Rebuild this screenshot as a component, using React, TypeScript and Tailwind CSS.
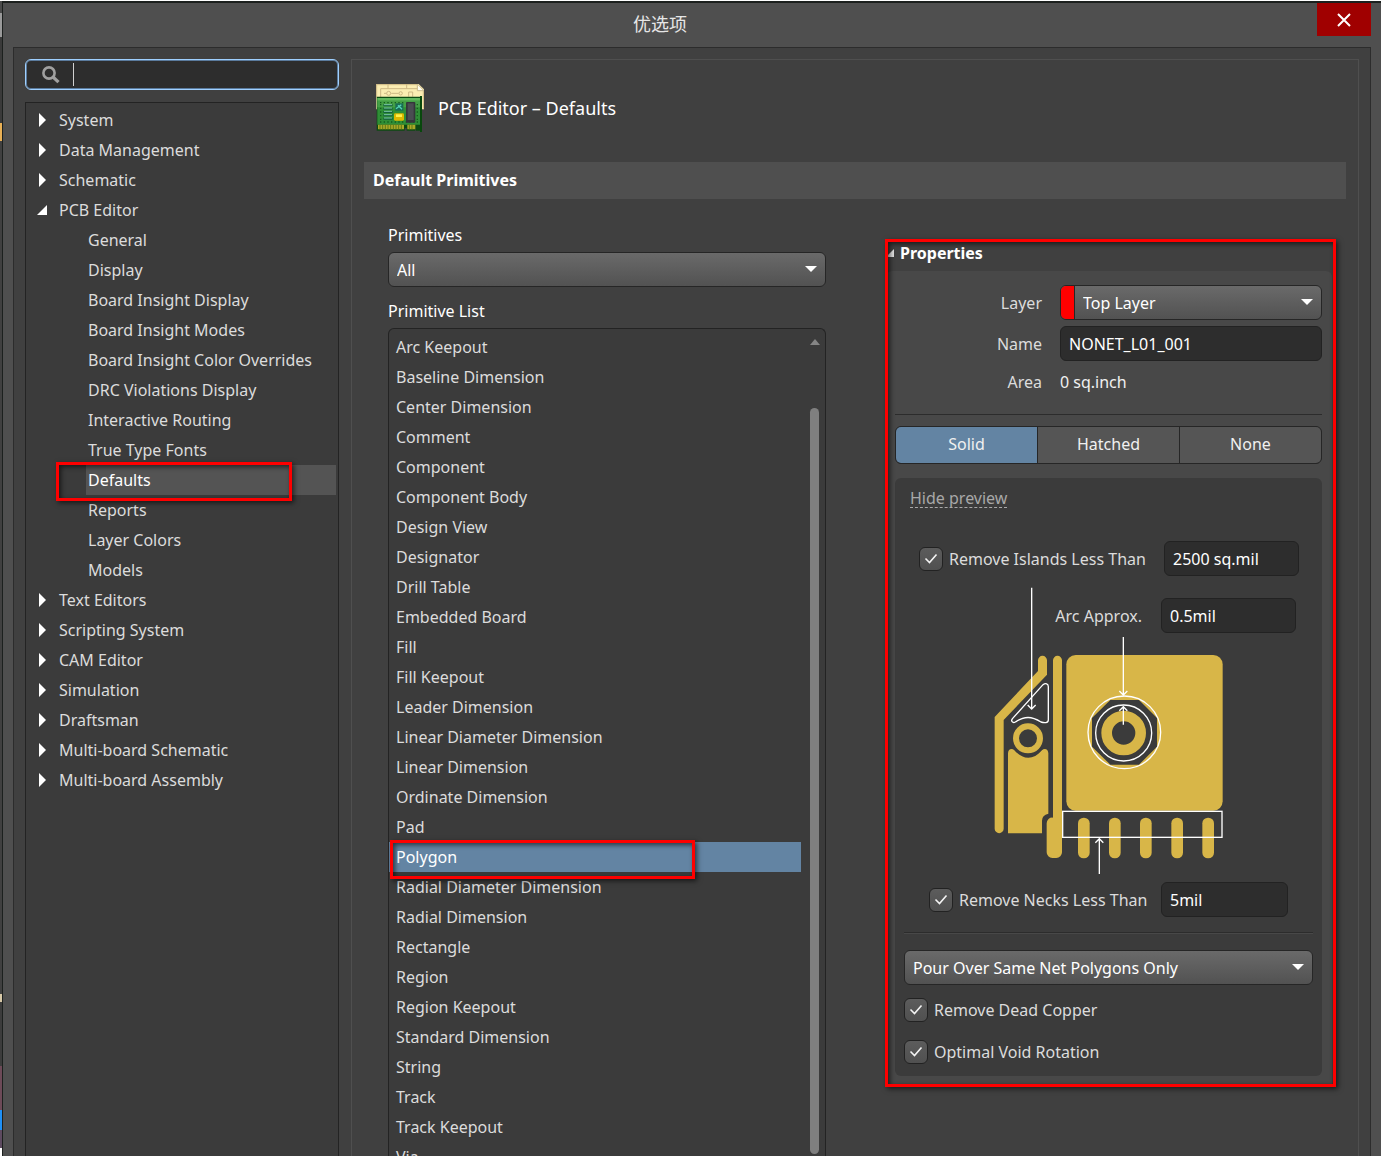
import { useState } from "react";
import type { ComponentProps, ReactNode } from "react";
import clsx from "clsx";

type TreeItem = {
  label: string;
  children?: string[];
};

const TREE: TreeItem[] = [
  { label: "System" },
  { label: "Data Management" },
  { label: "Schematic" },
  {
    label: "PCB Editor",
    children: [
      "General",
      "Display",
      "Board Insight Display",
      "Board Insight Modes",
      "Board Insight Color Overrides",
      "DRC Violations Display",
      "Interactive Routing",
      "True Type Fonts",
      "Defaults",
      "Reports",
      "Layer Colors",
      "Models",
    ],
  },
  { label: "Text Editors" },
  { label: "Scripting System" },
  { label: "CAM Editor" },
  { label: "Simulation" },
  { label: "Draftsman" },
  { label: "Multi-board Schematic" },
  { label: "Multi-board Assembly" },
];

const PRIMITIVES = [
  "Arc Keepout",
  "Baseline Dimension",
  "Center Dimension",
  "Comment",
  "Component",
  "Component Body",
  "Design View",
  "Designator",
  "Drill Table",
  "Embedded Board",
  "Fill",
  "Fill Keepout",
  "Leader Dimension",
  "Linear Diameter Dimension",
  "Linear Dimension",
  "Ordinate Dimension",
  "Pad",
  "Polygon",
  "Radial Diameter Dimension",
  "Radial Dimension",
  "Rectangle",
  "Region",
  "Region Keepout",
  "Standard Dimension",
  "String",
  "Track",
  "Track Keepout",
  "Via",
];

const FILL_MODES = ["Solid", "Hatched", "None"];

export default function App() {
  return (
    <div className="flex h-screen flex-col overflow-hidden bg-[#1c201e] font-['Noto_Sans','Noto_Sans_CJK_SC',sans-serif] text-base text-[#dcdcdc]">
      <div className="h-px shrink-0 bg-white" />
      <div className="flex min-h-0 flex-1">
        <DesktopEdge />
        <div className="mt-0.5 ml-px flex min-w-0 flex-1 flex-col bg-[#4f4f4f]">
          <TitleBar />
          <div className="mr-2.5 ml-2.5 flex min-h-0 flex-1 gap-3 border border-b-0 border-[#2c2c2c] bg-[#404040] px-[11px] pt-[11px]">
            <Sidebar />
            <main className="flex min-w-0 flex-1 flex-col border border-b-0 border-[#4f4f4f] px-3">
              <header className="flex items-center gap-3.5 pt-6 pb-[30px] pl-3">
                <BoardIcon />
                <h1 className="text-lg text-white">PCB Editor – Defaults</h1>
              </header>
              <h2 className="h-[37px] shrink-0 bg-[#4f4f4f] px-[9px] leading-9 font-bold text-white">
                Default Primitives
              </h2>
              <div className="grid min-h-0 flex-1 grid-cols-[minmax(0,438fr)_minmax(0,446fr)] grid-rows-[minmax(0,1fr)] gap-x-[60px] pr-3.5 pl-6">
                <PrimitivesColumn />
                <PropertiesPanel />
              </div>
            </main>
          </div>
        </div>
      </div>
    </div>
  );
}

// sliver of the windows lying behind the dialog
function DesktopEdge() {
  return (
    <div className="flex w-0.5 shrink-0 flex-col bg-[#404040]">
      <div className="h-3 bg-[#4a4a4a]" />
      <div className="h-6 bg-[#9a9a9a]" />
      <div className="h-[86px] bg-[#3a3a3a]" />
      <div className="h-[18px] bg-[#e9b055]" />
      <div className="flex-1 bg-[#404040]" />
      <div className="h-2 bg-[#d8c9a8]" />
      <div className="h-16 bg-[#3c3c3c]" />
      <div className="h-[44px] bg-[#6d4a58]" />
      <div className="h-5 bg-[#1f8ff5]" />
      <div className="h-[18px] bg-[#5d4a60]" />
      <div className="h-2 bg-white" />
    </div>
  );
}

function TitleBar() {
  return (
    <div className="flex h-11 shrink-0 pr-2.5">
      <div className="flex-1 text-center text-lg leading-[42px] text-[#e6e6e6]">
        优选项
      </div>
      <button
        type="button"
        aria-label="Close"
        className="flex h-[33px] w-[54px] items-center justify-center bg-[#a00000]"
      >
        <svg width="14" height="14" viewBox="0 0 14 14" stroke="#fff" strokeWidth="2">
          <path d="M1 1l12 12M13 1L1 13" />
        </svg>
      </button>
    </div>
  );
}

function Sidebar() {
  const [selected, setSelected] = useState("Defaults");
  return (
    <aside className="flex w-[314px] shrink-0 flex-col gap-3">
      <label className="flex h-[31px] shrink-0 items-center rounded-md border border-[#9fd0ff] bg-[#2d2d2d] pl-4 shadow-[inset_0_0_0_1px_#5b7b9d]">
        <svg width="18" height="18" viewBox="0 0 18 18" fill="none" stroke="#a0a0a0">
          <circle cx="7" cy="7" r="5.6" strokeWidth="2.6" />
          <path d="M11 11l5.5 5.2" strokeWidth="3.2" />
        </svg>
        <span className="ml-[13px] h-[23px] w-px bg-[#d0d0d0]" />
        <input
          type="text"
          aria-label="Search"
          className="min-w-0 flex-1 bg-transparent px-1 text-white outline-none"
        />
      </label>
      <nav className="min-h-0 flex-1 overflow-hidden border border-b-0 border-[#232323] bg-[#3b3b3b] pt-0.5 pr-0.5">
        <ul>
          {TREE.map((item) => (
            <li key={item.label}>
              <button type="button" className="flex h-[30px] w-full items-center pl-[11px]">
                <span className="flex w-[22px]">
                  <TreeArrow open={!!item.children} />
                </span>
                {item.label}
              </button>
              {item.children && (
                <ul>
                  {item.children.map((child) => (
                    <li key={child} className="relative flex h-[30px] pl-[60px]">
                      <button
                        type="button"
                        onClick={() => setSelected(child)}
                        className={clsx(
                          "flex-1 pl-0.5 text-left",
                          child === selected && "bg-[#545454] text-white",
                        )}
                      >
                        {child}
                      </button>
                      {child === "Defaults" && (
                        <Callout className="-top-[3px] left-[30px] z-10 h-[39px] w-[236px]" />
                      )}
                    </li>
                  ))}
                </ul>
              )}
            </li>
          ))}
        </ul>
      </nav>
    </aside>
  );
}

function TreeArrow({ open }: { open: boolean }) {
  return (
    <svg width="12" height="14" viewBox="0 0 12 14" fill="#fff">
      {open ? <path d="M10 2v10H0z" /> : <path d="M2 0l7 7-7 7z" />}
    </svg>
  );
}

function Callout({ className }: { className: string }) {
  return (
    <div
      className={clsx(
        "pointer-events-none absolute border-3 border-[#fe0000] shadow-[2px_2px_5px_rgba(0,0,0,0.6),inset_2px_2px_5px_rgba(0,0,0,0.6)]",
        className,
      )}
    />
  );
}

function PrimitivesColumn() {
  const [selected, setSelected] = useState("Polygon");
  return (
    <section className="flex min-h-0 flex-col pt-6">
      <label htmlFor="primitives" className="mb-[5px] text-white">
        Primitives
      </label>
      <SelectBox id="primitives" value="All" />
      <h3 className="mt-3 mb-[5px] text-white">Primitive List</h3>
      <div className="flex min-h-0 flex-1 rounded-t-md border border-b-0 border-[#232323] bg-[#3b3b3b]">
        <ul className="min-w-0 flex-1 overflow-hidden pt-[3px]">
          {PRIMITIVES.map((name) => (
            <li key={name} className="relative">
              <button
                type="button"
                onClick={() => setSelected(name)}
                className={clsx(
                  "block h-[30px] w-full pl-[7px] text-left",
                  name === selected && "bg-[#6384a3] text-white",
                )}
              >
                {name}
              </button>
              {name === "Polygon" && (
                <Callout className="-top-0.5 left-px z-10 h-[39px] w-[305px]" />
              )}
            </li>
          ))}
        </ul>
        <div className="flex w-6 flex-col items-center pt-2.5 pb-0.5 pl-[3px]">
          <svg width="10" height="6" viewBox="0 0 10 6" fill="#858585">
            <path d="M5 0l5 6H0z" />
          </svg>
          <div className="mt-[63px] w-[9px] flex-1 rounded-full bg-[#7f7f7f]" />
        </div>
      </div>
    </section>
  );
}

type SelectBoxProps = {
  id: string;
  value: string;
  swatch?: boolean;
  label?: string;
};

function SelectBox({ id, value, swatch, label }: SelectBoxProps) {
  return (
    <div className="relative flex h-[35px] w-full shrink-0 overflow-hidden rounded-md border border-[#262626] bg-linear-to-b from-[#6a6a6a] to-[#525252]">
      {swatch && <span className="w-3.5 shrink-0 border-r border-[#262626] bg-[#ff0000]" />}
      <select
        id={id}
        aria-label={label}
        defaultValue={value}
        className="min-w-0 flex-1 appearance-none bg-transparent pr-8 pl-2 text-white outline-none"
      >
        <option>{value}</option>
      </select>
      <svg
        className="pointer-events-none absolute top-[13px] right-2"
        width="12"
        height="6"
        viewBox="0 0 12 6"
        fill="#fff"
      >
        <path d="M0 0h12L6 6z" />
      </svg>
    </div>
  );
}

function TextBox({ className, ...props }: ComponentProps<"input">) {
  return (
    <input
      type="text"
      className={clsx(
        "h-[35px] rounded-md border border-[#222222] bg-[#2d2d2d] px-2 text-white outline-none",
        className,
      )}
      {...props}
    />
  );
}

function Check({ children }: { children: ReactNode }) {
  return (
    <label className="flex items-center gap-1.5">
      <span className="relative flex size-6">
        <input
          type="checkbox"
          defaultChecked
          className="peer size-6 appearance-none rounded-md border border-[#222222] bg-linear-to-b from-[#5c5c5c] to-[#505050]"
        />
        <svg
          className="pointer-events-none absolute inset-0 hidden peer-checked:block"
          viewBox="0 0 24 24"
          fill="none"
          stroke="#f4f4f4"
          strokeWidth="1.6"
        >
          <path d="M6.5 11.5l4 4 7-8" />
        </svg>
      </span>
      {children}
    </label>
  );
}

function PropertiesPanel() {
  const [mode, setMode] = useState("Solid");
  return (
    <section className="relative self-start pt-9">
      <h3 className="flex h-9 items-center gap-1.5 font-bold text-white">
        <svg width="8" height="8" viewBox="0 0 8 8" fill="#e0e0e0">
          <path d="M8 0v8H0z" />
        </svg>
        Properties
      </h3>
      <div className="rounded-t-md bg-[#484848] pt-3.5 pr-2.5 pb-2.5 pl-[9px]">
        <div className="grid grid-cols-[147px_1fr] items-center gap-x-[18px] gap-y-1.5">
          <label htmlFor="layer" className="text-right">
            Layer
          </label>
          <SelectBox id="layer" value="Top Layer" swatch />
          <label htmlFor="name" className="text-right">
            Name
          </label>
          <TextBox id="name" defaultValue="NONET_L01_001" className="w-full" />
          <span className="text-right leading-[30px]">Area</span>
          <span className="text-[#f0f0f0]">0 sq.inch</span>
        </div>
        <hr className="mt-[17px] border-[#2c2c2c]" />
        <div className="mt-[11px] flex h-[38px] overflow-hidden rounded-md border border-[#262626] bg-[#262626]">
          {FILL_MODES.map((m) => (
            <button
              key={m}
              type="button"
              onClick={() => setMode(m)}
              className={clsx(
                "flex-1 border-r border-[#262626] pb-0.5 text-[#f0f0f0] last:border-r-0",
                m === mode ? "bg-[#6384a3]" : "bg-[#555555]",
              )}
            >
              {m}
            </button>
          ))}
        </div>
        <div className="mt-3.5 rounded-md bg-[#3b3b3b] px-[9px] pt-[11px] pb-3">
          <a
            href="#preview"
            className="ml-1.5 block w-fit border-b border-dashed border-[#a8a8a8] leading-[18px] text-[#a8a8a8]"
          >
            Hide preview
          </a>
          <div className="mt-[33px] flex items-center justify-between pr-3.5 pl-[15px]">
            <Check>Remove Islands Less Than</Check>
            <TextBox
              aria-label="Remove Islands Less Than"
              defaultValue="2500 sq.mil"
              className="w-[135px]"
            />
          </div>
          <div className="relative h-[306px] pt-[22px]">
            <PolygonPreview />
            <div className="relative flex items-center justify-end gap-[19px] pr-[17px]">
              <label htmlFor="arc">Arc Approx.</label>
              <TextBox id="arc" defaultValue="0.5mil" className="w-[135px]" />
            </div>
          </div>
          <div className="flex items-center justify-between pr-[25px] pl-[25px]">
            <Check>Remove Necks Less Than</Check>
            <TextBox
              aria-label="Remove Necks Less Than"
              defaultValue="5mil"
              className="w-[127px]"
            />
          </div>
          <hr className="mt-[15px] mb-[17px] border-[#2c2c2c] shadow-[0_1px_0_#484848]" />
          <SelectBox id="pour" label="Pour mode" value="Pour Over Same Net Polygons Only" />
          <div className="mt-[13px] flex flex-col gap-[18px]">
            <Check>Remove Dead Copper</Check>
            <Check>Optimal Void Rotation</Check>
          </div>
        </div>
      </div>
      <Callout className="top-10 -right-1 -bottom-px -left-px" />
    </section>
  );
}

function PolygonPreview() {
  return (
    <svg
      className="absolute top-1 left-[66px]"
      width="280"
      height="300"
      viewBox="0 0 840 900"
      fill="none"
    >
      <g fill="#d8b648">
        <rect x="289" y="225" width="469" height="467" rx="28" />
        <path d="M249 241a13 13 0 0 1 27 0V817a17 17 0 0 1-17 17H247a17 17 0 0 1-17-17V730a17 17 0 0 1 19-17z" />
        <path d="M204 241a13 13 0 0 1 27 0V284L101 420V746a13 13 0 0 1-27 0V411L204 273z" />
        <path d="M114 760V520C114 507 126 504 133 511C160 541 190 541 216 511C223 504 235 507 235 520V701Q216 705 216 722V760z" />
        <rect x="324" y="713" width="35" height="122" rx="17" />
        <rect x="417" y="713" width="35" height="122" rx="17" />
        <rect x="510" y="713" width="35" height="122" rx="17" />
        <rect x="604" y="713" width="35" height="122" rx="17" />
        <rect x="697" y="713" width="35" height="122" rx="17" />
      </g>
      <path d="M421 360H507L561 414V500L507 554H421L366 500V414z" fill="#3b3b3b" />
      <circle cx="461" cy="459" r="51" stroke="#d8b648" strokeWidth="32" />
      <circle cx="174" cy="475" r="36" stroke="#d8b648" strokeWidth="18" />
      <g stroke="#fff" strokeWidth="4">
        <circle cx="463" cy="457" r="109" />
        <circle cx="461" cy="459" r="84" />
        <rect x="278" y="694" width="478" height="78" />
        <path d="M219 314C227 308 235 311 235 320V420C235 430 222 429 213 426C184 408 164 408 136 426C128 430 121 423 128 415z" />
        <path d="M185 23V387M173 375l12 12 12-12" />
        <path d="M460 171V345M448 333l12 12 12-12" />
        <path d="M460 434V380M448 392l12-12 12 12" />
        <path d="M388 882V776M376 788l12-12 12 12" />
      </g>
    </svg>
  );
}

function BoardIcon() {
  return (
    <svg width="48" height="48" viewBox="0 0 144 144">
      <path d="M0 0h128l16 16v60H0z" fill="#fbedb2" />
      <g fill="none" stroke="#cdb884" strokeWidth="3">
        <path d="M0 2h124M2 0v40M14 40V14h114M36 0v14M92 0v14" />
        <path d="M24 28h8M46 28h22M98 38V24h12v14" />
        <circle cx="38" cy="28" r="6" />
        <circle cx="74" cy="28" r="5" />
        <path d="M142 20v54" />
      </g>
      <path d="M124 0l20 20h-20z" fill="#fffdf0" stroke="#c9b98a" strokeWidth="3" />
      <path d="M2 38h134v102h-16v-4h-2v4H92v-8h-6v8H2z" fill="#0d4a12" />
      <path d="M4 42h128v80H4z" fill="#2f8f36" />
      <path d="M4 42h128v8H4z" fill="#62b85e" />
      <path d="M4 50h128v20H4z" fill="#44a046" />
      <path d="M6 122h78v14H6zM94 122h24v14H94z" fill="#a8a827" />
      <path
        d="M12 122v14M20 122v14M28 122v14M36 122v14M44 122v14M52 122v14M60 122v14M68 122v14M76 122v14M100 122v14M108 122v14"
        stroke="#5f7a18"
        strokeWidth="3"
      />
      <path
        d="M12 56h76M12 114h116M14 60v50M124 60v50"
        stroke="#155c1e"
        strokeWidth="4"
        strokeDasharray="4 7"
      />
      <path
        d="M22 64h28M22 74h28M22 84h28M22 94h28M22 104h28"
        stroke="#14603c"
        strokeWidth="6"
      />
      <path
        d="M24 62h24M24 72h24M24 82h24M24 92h24M24 102h24"
        stroke="#7cc8a6"
        strokeWidth="3"
      />
      <path d="M58 58h24v22H58z" fill="#176c55" />
      <path d="M60 74l16-12M66 64l12 12" stroke="#56d3b4" strokeWidth="4" />
      <rect x="54" y="88" width="30" height="22" rx="4" fill="#dcb900" />
      <path d="M60 91h18v8H60z" fill="#fff04a" />
      <rect x="90" y="54" width="28" height="62" rx="3" fill="#34363a" />
      <path d="M95 58h18v50H95z" fill="#4a4d52" />
      <path d="M132 36h6v108h-6z" fill="#08480c" />
    </svg>
  );
}
